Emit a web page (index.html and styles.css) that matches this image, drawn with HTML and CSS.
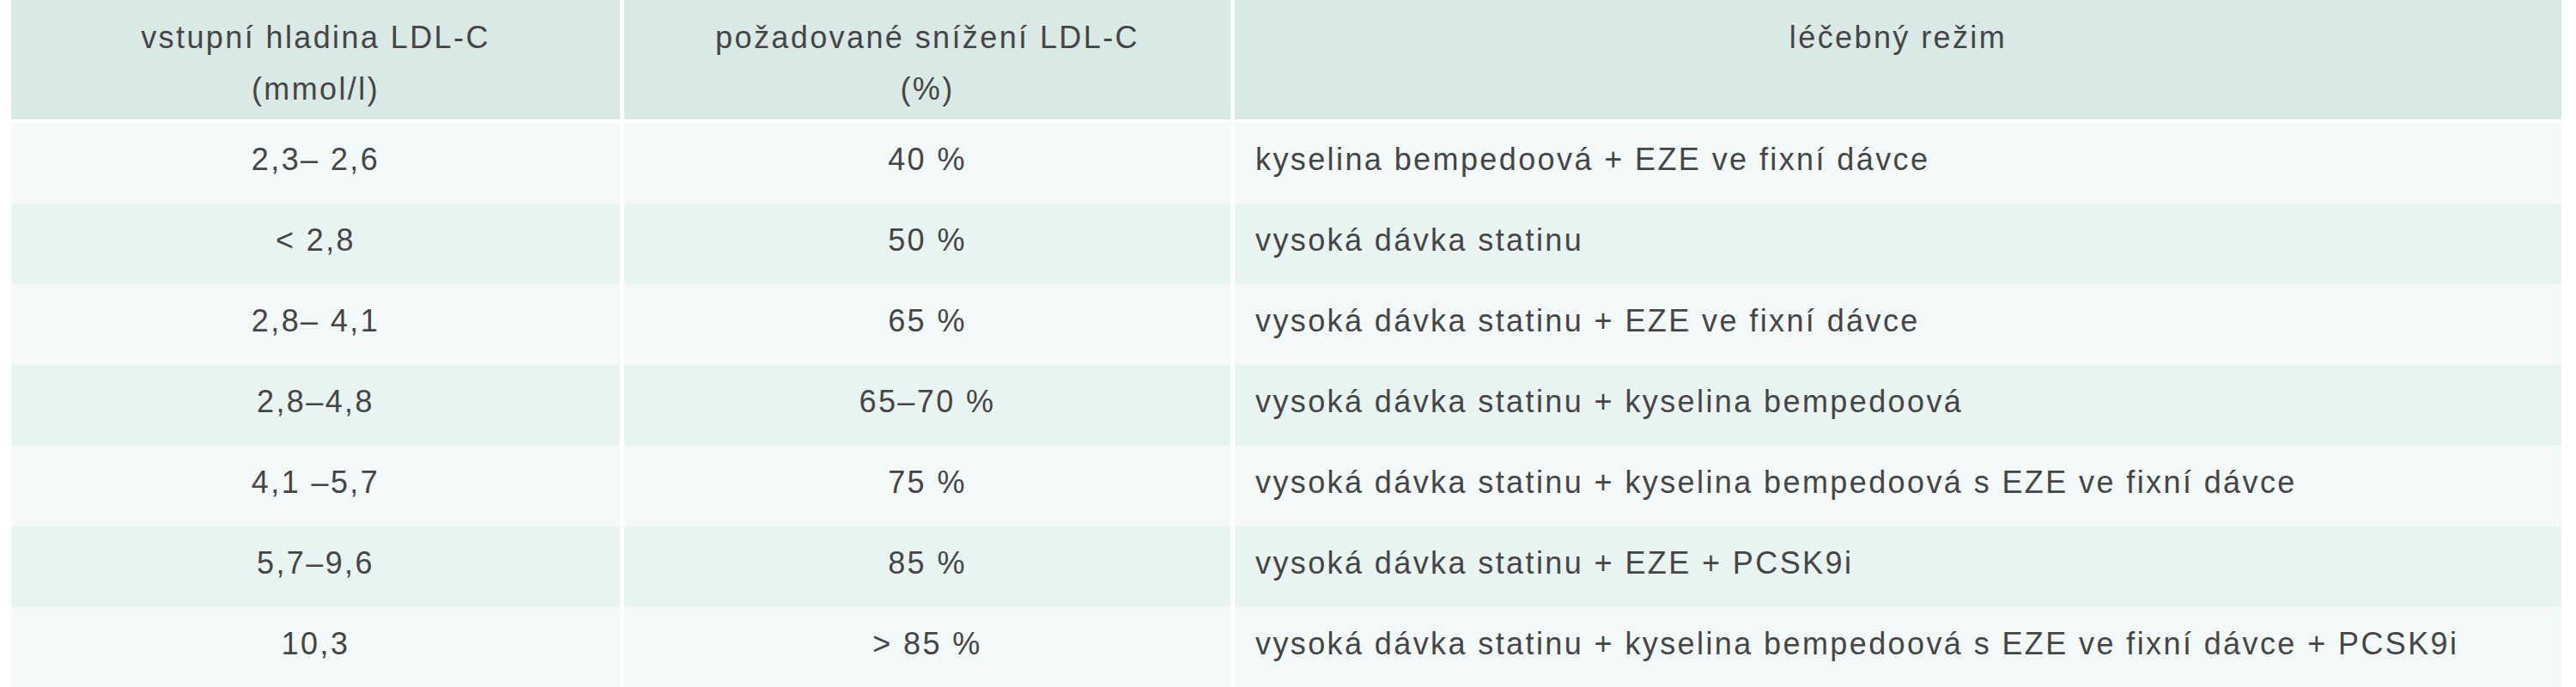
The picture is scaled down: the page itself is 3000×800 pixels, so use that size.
FILE: index.html
```html
<!DOCTYPE html>
<html lang="cs">
<head>
<meta charset="utf-8">
<title>Léčebný režim dle LDL-C</title>
<link rel="stylesheet" href="styles.css">
</head>
<body>
<div class="table">
  <div class="row head">
    <div class="cell c">vstupní hladina LDL-C<br>(mmol/l)</div>
    <div class="cell c">požadované snížení LDL-C<br>(%)</div>
    <div class="cell c">léčebný režim</div>
  </div>
  <div class="row odd">
    <div class="cell c">2,3– 2,6</div>
    <div class="cell c">40 %</div>
    <div class="cell l">kyselina bempedoová + EZE ve fixní dávce</div>
  </div>
  <div class="row even">
    <div class="cell c">&lt; 2,8</div>
    <div class="cell c">50 %</div>
    <div class="cell l">vysoká dávka statinu</div>
  </div>
  <div class="row odd">
    <div class="cell c">2,8– 4,1</div>
    <div class="cell c">65 %</div>
    <div class="cell l">vysoká dávka statinu + EZE ve fixní dávce</div>
  </div>
  <div class="row even">
    <div class="cell c">2,8–4,8</div>
    <div class="cell c">65–70 %</div>
    <div class="cell l">vysoká dávka statinu + kyselina bempedoová</div>
  </div>
  <div class="row odd">
    <div class="cell c">4,1 –5,7</div>
    <div class="cell c">75 %</div>
    <div class="cell l">vysoká dávka statinu + kyselina bempedoová s EZE ve fixní dávce</div>
  </div>
  <div class="row even">
    <div class="cell c">5,7–9,6</div>
    <div class="cell c">85 %</div>
    <div class="cell l">vysoká dávka statinu + EZE + PCSK9i</div>
  </div>
  <div class="row odd">
    <div class="cell c">10,3</div>
    <div class="cell c">&gt; 85 %</div>
    <div class="cell l">vysoká dávka statinu + kyselina bempedoová s EZE ve fixní dávce + PCSK9i</div>
  </div>
</div>
</body>
</html>
```
FILE: styles.css
```css
html, body {
  margin: 0;
  padding: 0;
  background: #ffffff;
}
body {
  font-family: "Liberation Sans", Arial, sans-serif;
  color: #454545;
  overflow: hidden;
}
.table {
  margin-left: 13px;
  width: 2970px;
  display: flex;
  flex-direction: column;
}
.row {
  display: grid;
  grid-template-columns: 709px 706px 1545px;
  column-gap: 5px;
  height: 94px;
}
.row.head {
  height: 139px;
  margin-bottom: 4px;
}
.cell {
  font-size: 36px;
  letter-spacing: 2.4px;
  display: flex;
  align-items: center;
  white-space: nowrap;
  padding-bottom: 8px;
}
.cell.c { justify-content: center; text-align: center; }
.cell.l { justify-content: flex-start; padding-left: 24px; }
.head .cell {
  background: #d9eae6;
  align-items: flex-start;
  padding-top: 14px;
  padding-bottom: 0;
  line-height: 60px;
}
.odd .cell { background: #f2f9f8; }
.even .cell { background: #e8f4f1; }
```
